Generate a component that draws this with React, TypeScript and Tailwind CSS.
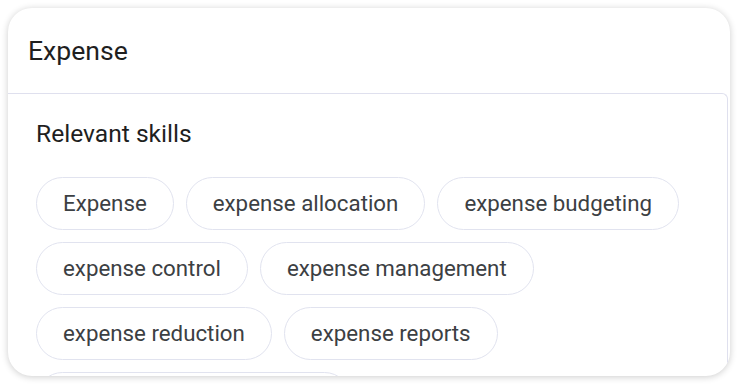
import React from "react";

const rows = [
  ["Expense", "expense allocation", "expense budgeting"],
  ["expense control", "expense management"],
  ["expense reduction", "expense reports"],
  ["expense tracking software"],
];

function Chip({ label }: { label: string }) {
  return (
    <div className="h-[53px] flex items-center px-[26px] rounded-full border border-[#e1e3ef] bg-white text-[22.3px] text-[#3c4043] whitespace-nowrap">
      {label}
    </div>
  );
}

export default function App() {
  return (
    <div
      className="w-[742px] h-[388px] bg-white p-2"
      style={{ fontFamily: "Roboto, 'Noto Sans', sans-serif" }}
    >
      <div className="w-[722px] h-[368px] rounded-[24px] overflow-hidden bg-white shadow-[0_1px_7px_rgba(0,0,0,0.2)] flex flex-col">
        <div className="h-[85px] shrink-0 flex items-center pl-[20px] text-[26.6px] text-[#1f1f1f]">
          Expense
        </div>
        <div className="flex-1 mr-[2px] border-t border-r border-[#dfe0ee] rounded-tr-[6px] pl-[28px] pt-[24px]">
          <div className="text-[24.6px] leading-[32px] text-[#1f1f1f]">Relevant skills</div>
          <div className="mt-[27px] flex flex-col gap-[12px]">
            {rows.map((r, i) => (
              <div key={i} className="flex gap-[12px]">
                {r.map((c) => (
                  <Chip key={c} label={c} />
                ))}
              </div>
            ))}
          </div>
        </div>
      </div>
    </div>
  );
}
